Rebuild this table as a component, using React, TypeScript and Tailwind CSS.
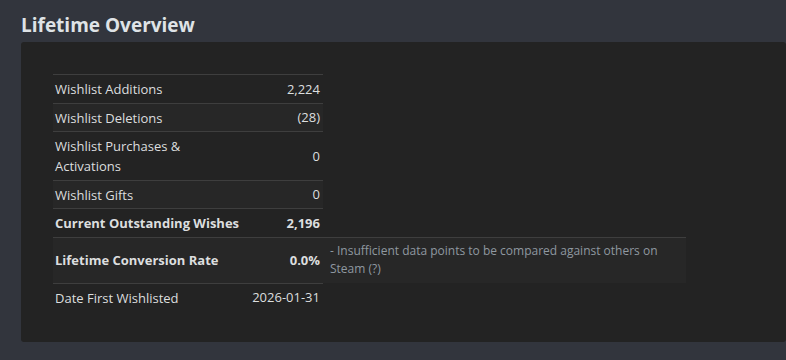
const rows = [
  { label: "Wishlist Additions", value: "2,224" },
  { label: "Wishlist Deletions", value: "(28)" },
  { label: "Wishlist Purchases & Activations", value: "0" },
  { label: "Wishlist Gifts", value: "0" },
  { label: "Current Outstanding Wishes", value: "2,196", bold: true },
  { label: "Lifetime Conversion Rate", value: "0.0%", bold: true, note: true },
  { label: "Date First Wishlisted", value: "2026-01-31" },
];

export default function App() {
  return (
    <div
      className="w-[786px] h-[360px] overflow-hidden bg-[#32353d] pl-[21px] pt-[13px]"
      style={{ fontFamily: '"Open Sans", "Noto Sans", Arial, sans-serif' }}
    >
      <h2 className="text-[19px] leading-[24px] font-bold text-[#dfe3e6] mb-[5px]">
        Lifetime Overview
      </h2>

      <div className="bg-[#232323] rounded-[3px] h-[300px] pl-[32px] pt-[32px]">
        <div className="flex flex-col text-[13px] text-[#dcdedf]">
          {rows.map((r, i) => (
            <div key={r.label} className="flex">
              <div
                className={`w-[270px] flex items-center border-t border-[#3e3e3e] ${
                  i % 2 === 1 ? "bg-[#272727]" : ""
                } ${r.bold ? "font-bold" : ""}`}
              >
                <div
                  className={`w-[184px] shrink-0 pl-[2px] pr-1 pt-[4px] pb-[3.5px] leading-[20px] ${
                    r.bold ? "whitespace-nowrap" : ""
                  }`}
                >
                  {r.label}
                </div>
                <div className="flex-1 pr-[3px] leading-[20px] text-right">{r.value}</div>
              </div>
              {r.note && (
                <div className="w-[363px] border-t border-[#3e3e3e] bg-[#272727] pl-[7px] pr-2 pt-[4px] pb-[5px] text-[12px] leading-[18px] text-[#8f98a0]">
                  - Insufficient data points to be compared against others on Steam (?)
                </div>
              )}
            </div>
          ))}
        </div>
      </div>
    </div>
  );
}
